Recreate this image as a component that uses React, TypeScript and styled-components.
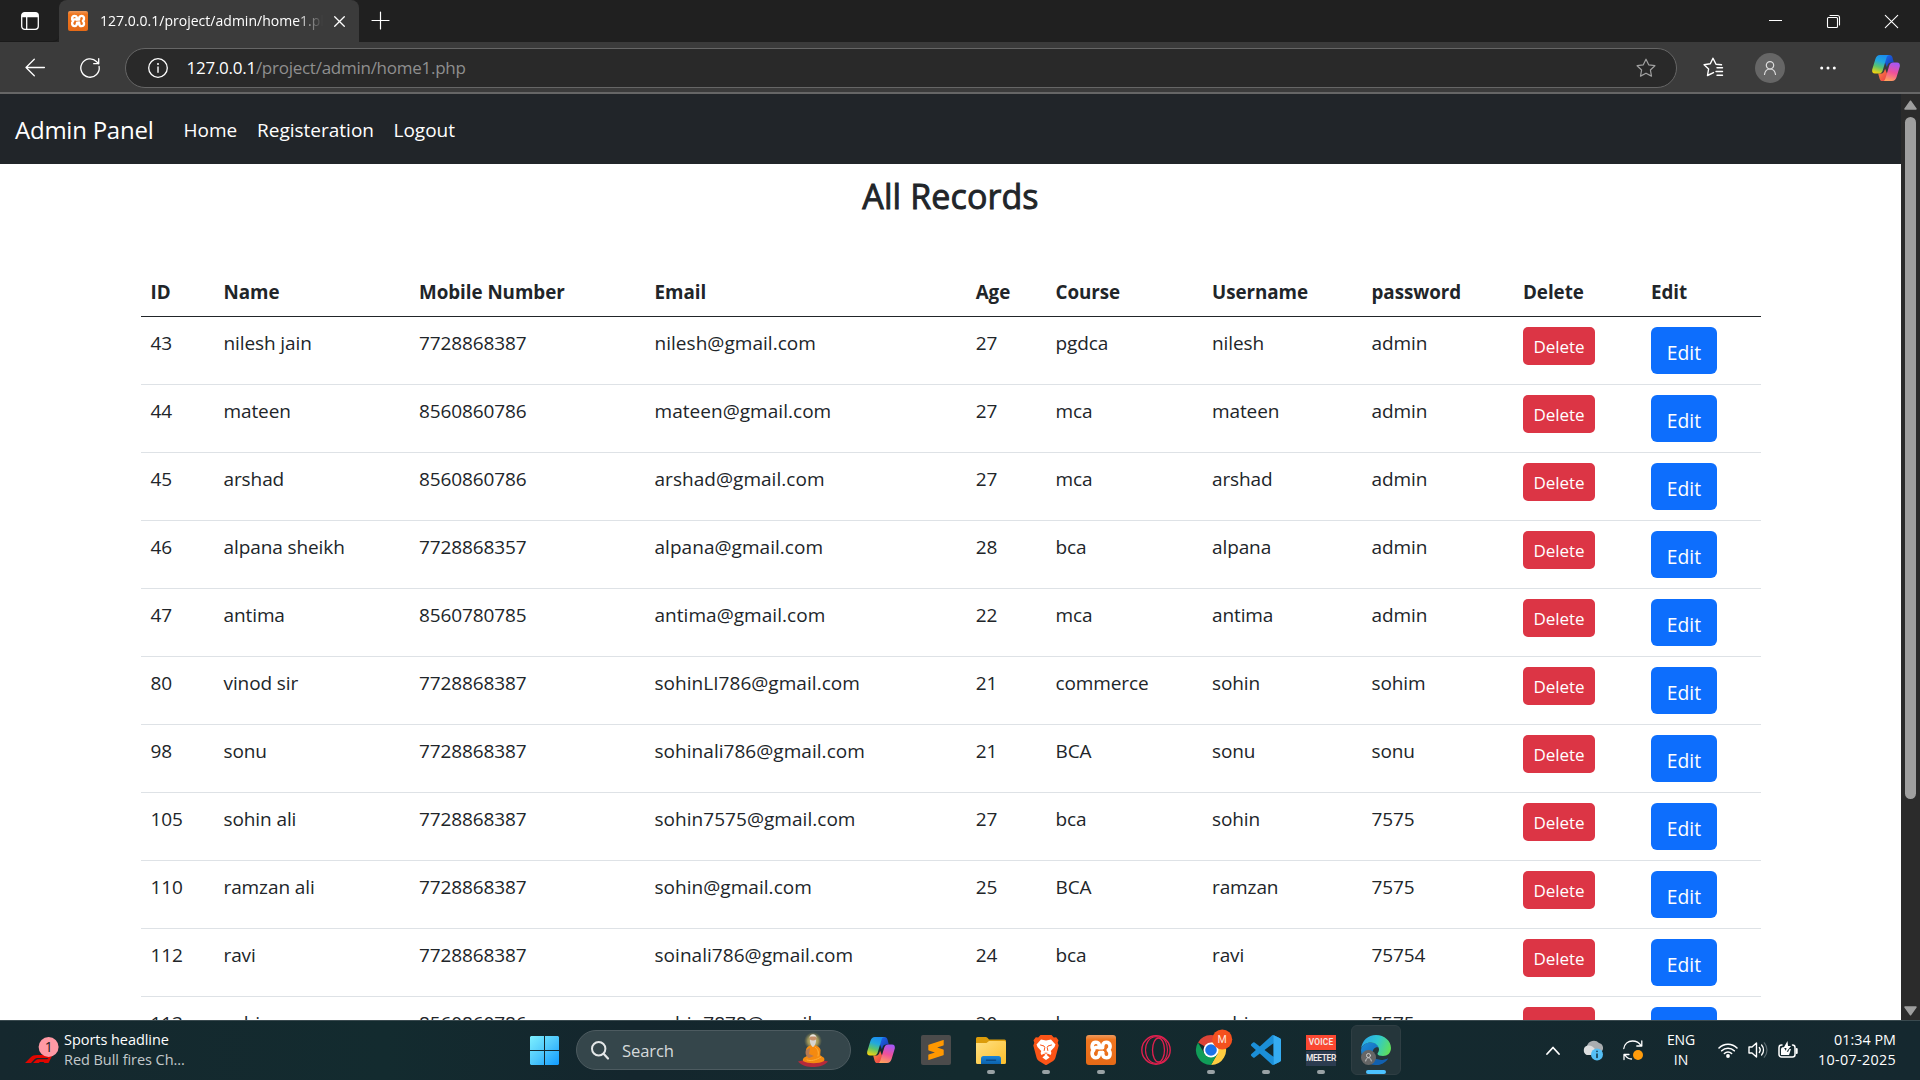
import React from "react";
import styled, { createGlobalStyle, css } from "styled-components";
import { SiSublimetext } from "react-icons/si";

const GlobalStyle = createGlobalStyle`
  * { box-sizing: border-box; }
  html, body { margin: 0; padding: 0; }
  body {
    width: 1920px;
    height: 1080px;
    overflow: hidden;
    background: #fff;
    font-family: "Open Sans", "Noto Sans", sans-serif;
  }
  svg { display: block; flex: none; overflow: visible; }
`;

const Screen = styled.div`
  width: 1920px;
  height: 1080px;
  display: flex;
  flex-direction: column;
  overflow: hidden;
`;

/* ---------- browser chrome ---------- */

const TabStrip = styled.div`
  height: 42px;
  flex: none;
  display: flex;
  align-items: stretch;
  justify-content: space-between;
  background: #202020;
`;

const TabGroup = styled.div`
  display: flex;
  align-items: center;
`;

const WorkspaceButton = styled.div`
  width: 59px;
  height: 42px;
  padding-left: 21px;
  display: flex;
  align-items: center;
  border-bottom: 1px solid #1a1a1a;
  border-radius: 0 0 6px 0;
`;

const Tab = styled.div`
  width: 300px;
  height: 42px;
  padding: 0 14px 0 9px;
  display: flex;
  align-items: center;
  background: #3b3b3b;
  border-radius: 8px 8px 0 0;
`;

const TabTitle = styled.div`
  width: 223px;
  margin: -1px 11px 0 12px;
  overflow: hidden;
  white-space: nowrap;
  color: #fff;
  font-size: 14px;
  letter-spacing: 0.02px;
  line-height: 22px;
  mask-image: linear-gradient(90deg, #000 88%, transparent 100%);
`;

const NewTab = styled.div`
  margin-left: 13px;
  padding-bottom: 1px;
`;

const WindowControls = styled.div`
  display: flex;
  align-items: center;
  gap: 45px;
  padding-right: 22px;
`;

const Toolbar = styled.div`
  height: 52px;
  flex: none;
  display: flex;
  align-items: center;
  padding: 0 20px 0 25px;
  background: #3b3b3b;
  border-bottom: 2px solid #666;
`;

const AddressBar = styled.div`
  width: 1552px;
  height: 40px;
  margin: 2px 26px 0 25px;
  padding: 0 20px 0 22px;
  display: flex;
  align-items: center;
  border: 1px solid #666;
  border-radius: 20px;
  background: #292929;
`;

const Url = styled.div`
  flex: 1;
  margin-left: 18.5px;
  padding-bottom: 1px;
  color: #8f8f8f;
  font-size: 17px;
  letter-spacing: -0.26px;
  white-space: nowrap;
`;

const UrlHost = styled.span`
  color: #fff;
`;

const ReloadSlot = styled.div`
  margin: 1px 0 0 35px;
`;

const ToolbarActions = styled.div`
  display: flex;
  align-items: center;
`;

const Avatar = styled.div`
  width: 30px;
  height: 30px;
  margin: 2px 35px 0 32px;
  border-radius: 50%;
  background: #666;
  display: flex;
  align-items: center;
  justify-content: center;
`;

const CopilotSlot = styled.div`
  margin-left: 36px;
  padding-top: 2px;
`;

/* ---------- page ---------- */

const Viewport = styled.div`
  height: 926px;
  flex: none;
  display: flex;
`;

const Page = styled.main`
  width: 1901px;
  height: 926px;
  overflow: hidden;
  background: #fff;
  color: #212529;
`;

const Navbar = styled.nav`
  height: 70px;
  display: flex;
  align-items: center;
  padding: 2px 0 0 15px;
  background: #212529;
  color: #fff;
  white-space: nowrap;
`;

const Brand = styled.div`
  width: 168.5px;
  font-size: 24px;
  letter-spacing: -0.24px;
  line-height: 38px;
`;

const NavLink = styled.div<{ $w: number }>`
  width: ${(p) => p.$w}px;
  font-size: 19px;
  letter-spacing: 0;
  line-height: 30px;
`;

const Title = styled.h2`
  height: 42px;
  margin: 11px 0 49px;
  text-align: center;
  font-size: 34px;
  font-weight: 400;
  letter-spacing: 0.1px;
  line-height: 42px;
  -webkit-text-stroke: 0.9px #212529;
`;

const Table = styled.table`
  width: 1620px;
  margin: 0 auto;
  table-layout: fixed;
  border-collapse: separate;
  border-spacing: 0;
  font-size: 19px;
  line-height: 30px;
`;

const HeadCell = styled.th<{ $w: number }>`
  width: ${(p) => p.$w}px;
  height: 51px;
  padding: 11px 10px 9px;
  text-align: left;
  font-weight: 700;
  font-size: 18.8px;
  letter-spacing: -0.04px;
  border-bottom: 1px solid #212529;
  white-space: nowrap;
`;

const Cell = styled.td<{ $action?: boolean; $wide?: boolean }>`
  height: 68px;
  padding: ${(p) => (p.$action ? 10 : 11)}px 10px 9px;
  vertical-align: top;
  border-bottom: 1px solid #dee2e6;
  letter-spacing: ${(p) => (p.$wide ? 0.04 : -0.1)}px;
  white-space: nowrap;
`;

const ActionButton = styled.button<{ $kind: "delete" | "edit" }>`
  display: block;
  border: 0;
  padding: 0;
  color: #fff;
  font-family: inherit;
  ${(p) =>
    p.$kind === "delete"
      ? css`
          width: 72px;
          height: 38px;
          border-radius: 5px;
          background: #dc3545;
          font-size: 17px;
          letter-spacing: -0.1px;
        `
      : css`
          width: 66px;
          height: 47px;
          padding-top: 3px;
          border-radius: 6px;
          background: #0d6efd;
          font-size: 19.3px;
        `}
`;

const Scrollbar = styled.div`
  width: 19px;
  height: 926px;
  padding: 6px 3px 4px;
  display: flex;
  flex-direction: column;
  align-items: center;
  background: #2b2b2b;
`;

const ScrollThumb = styled.div`
  width: 11px;
  height: 682px;
  margin: 7px 0 auto;
  border-radius: 6px;
  background: #9f9f9f;
`;

/* ---------- taskbar ---------- */

const Taskbar = styled.footer`
  height: 60px;
  flex: none;
  display: flex;
  align-items: center;
  justify-content: space-between;
  background: linear-gradient(90deg, #15282e 0%, #132b2f 20%, #14262d 33%, #132a2e 50%, #15282f 100%);
  border-top: 1px solid #3a4a4f;
  color: #fff;
  font-size: 14px;
  line-height: 20px;
  white-space: nowrap;
`;

const Widget = styled.div`
  width: 530px;
  display: flex;
  align-items: center;
  padding-left: 25px;
`;

const WidgetLogo = styled.div`
  margin-top: -3px;
`;

const WidgetText = styled.div`
  margin: -2px 0 0 5px;
  font-size: 14.5px;
  letter-spacing: -0.05px;
`;

const Muted = styled.div`
  color: #c3c9cb;
`;

const Apps = styled.div`
  flex: 1;
  height: 59px;
  display: flex;
  align-items: center;
`;

const SearchBox = styled.div`
  width: 275px;
  height: 40px;
  margin: -1px 5px 0 17px;
  padding: 0 22px 0 14px;
  display: flex;
  align-items: center;
  border: 1px solid #4d5b60;
  border-radius: 20px;
  background: #35464b;
`;

const SearchLabel = styled.div`
  flex: 1;
  margin-left: 13px;
  padding-top: 1px;
  color: #d5dadb;
  font-size: 16.6px;
  letter-spacing: -0.1px;
`;

const AppSlot = styled.div<{ $active?: boolean }>`
  position: relative;
  width: 50px;
  height: 50px;
  margin: -1px ${(p) => (p.$active ? 0 : 5)}px 0 0;
  display: flex;
  align-items: center;
  justify-content: center;
  border: 1px solid ${(p) => (p.$active ? "#2f3e43" : "transparent")};
  border-radius: 6px;
  background: ${(p) => (p.$active ? "#25363b" : "transparent")};
`;

const Indicator = styled.div<{ $active?: boolean }>`
  position: absolute;
  bottom: 0;
  left: 50%;
  width: ${(p) => (p.$active ? 20 : 8)}px;
  height: 4px;
  transform: translateX(-50%);
  border-radius: 2px;
  background: ${(p) => (p.$active ? "#4cc2ff" : "#99a2a5")};
`;

const XamppTile = styled.div<{ $s: number }>`
  width: ${(p) => p.$s}px;
  height: ${(p) => p.$s}px;
  flex: none;
  display: flex;
  align-items: center;
  justify-content: center;
  border-radius: ${(p) => p.$s / 10}px;
  background: linear-gradient(#ec9a5e, #f0761f 16%, #e56a17);
`;

const SublimeTile = styled.div`
  width: 30px;
  height: 30px;
  display: flex;
  align-items: center;
  justify-content: center;
  border-radius: 2px;
  background: #4b4b4b;
  color: #ff9800;
`;

const VoiceTile = styled.div`
  width: 30px;
  height: 30px;
  display: flex;
  flex-direction: column;
  gap: 1px;
  font-family: Roboto, "Liberation Sans", sans-serif;
  font-size: 8.4px;
  font-weight: 600;
  text-align: center;
  color: #f2e9e6;
`;

const VoiceRow = styled.div<{ $bg: string; $spacing: number }>`
  flex: 1;
  line-height: 15px;
  background: ${(p) => p.$bg};
  letter-spacing: ${(p) => p.$spacing}px;
`;

const Tray = styled.div`
  display: flex;
  align-items: center;
  padding: 0 24px 1px 0;
`;

const Language = styled.div`
  width: 30px;
  margin: 0 22px 0 23px;
  text-align: center;
  letter-spacing: -0.1px;
`;

const Clock = styled.div`
  width: 80px;
  margin: -1px 0 0 18px;
  text-align: right;
`;

const ClockLine = styled.div<{ $spacing: number }>`
  font-size: 14.3px;
  letter-spacing: ${(p) => p.$spacing}px;
`;

/* ---------- drawings ---------- */

const stroke = (w = 1.3, c = "#fff") => ({ fill: "none", stroke: c, strokeWidth: w, strokeLinecap: "round" as const, strokeLinejoin: "round" as const });

const XamppMark = ({ size }: { size: number }) => (
  <XamppTile $s={size}>
    <svg width={size} height={size} viewBox="0 0 30 30">
      <g fill="none" stroke="#fff" strokeWidth="3.600" strokeLinejoin="round" strokeLinecap="round">
        <path d="M9.500 12.500H13.200V9.500C12.800 8 11.500 7.300 9.800 7.300C5.800 7.300 5 12.800 7.800 15C5 17.200 5.800 22.700 9.800 22.700C12.500 22.700 13.600 20.500 13.600 17.500H16.600" />
        <path d="M13.200 12.700H16.600C16.400 9.500 17.500 7.300 20.200 7.300C24.800 7.300 25 12.800 22.300 15C25 17.200 24.800 22.700 20.300 22.700C17.600 22.700 16.600 20.500 16.600 17.500" />
      </g>
    </svg>
  </XamppTile>
);

const Copilot = ({ id }: { id: string }) => (
  <svg width="28" height="26" viewBox="0 0 28 26">
    <defs>
      <linearGradient id={id + "a"} x1=".6" y1="0" x2=".3" y2="1">
        <stop offset="0" stopColor="#1b8df0" />
        <stop offset=".35" stopColor="#22a9dc" />
        <stop offset=".65" stopColor="#5cc46b" />
        <stop offset="1" stopColor="#f3d410" />
      </linearGradient>
      <linearGradient id={id + "b"} x1=".6" y1="0" x2=".3" y2="1">
        <stop offset="0" stopColor="#a557f5" />
        <stop offset=".5" stopColor="#f0509a" />
        <stop offset="1" stopColor="#ffa35c" />
      </linearGradient>
      <linearGradient id={id + "c"} x1="0" y1="0" x2="1" y2="1">
        <stop offset="0" stopColor="#1d6ff0" />
        <stop offset="1" stopColor="#1836ae" />
      </linearGradient>
      <linearGradient id={id + "d"} x1="0" y1="0" x2="1" y2="1">
        <stop offset="0" stopColor="#ff8f3c" />
        <stop offset="1" stopColor="#e8344c" />
      </linearGradient>
    </defs>
    <path fill={`url(#${id}c)`} d="M12 0h5.600c1.600 0 2.400.9 2.900 2.600l1.300 4.800h-2.600c-2 0-3 .9-3.600 2.800l-.7 2L11.600 4z" />
    <path fill={`url(#${id}d)`} d="M16 26h-5.600c-1.600 0-2.400-.9-2.900-2.600l-1.300-4.800h2.600c2 0 3-.9 3.600-2.800l.7-2L16.400 22z" />
    <path fill={`url(#${id}a)`} d="M8 0h9.500c-1.500 0-2.400 1-2.900 2.600L10.700 15.500C10 17.700 8.800 18.600 6.500 18.600H3C.8 18.600-.3 17 .2 14.500L3.400 4C4.300 1.300 5.600 0 8 0z" />
    <path fill={`url(#${id}b)`} d="M20 26h-9.500c1.500 0 2.400-1 2.900-2.600L17.300 10.500C18 8.300 19.200 7.400 21.500 7.400h3.500c2.200 0 3.300 1.600 2.800 4.100L24.600 22C23.700 24.700 22.400 26 20 26z" />
  </svg>
);

const Person = ({ size }: { size: number }) => (
  <svg width={size} height={size} viewBox="0 0 14 14">
    <circle cx="7" cy="4.300" r="3.700" {...stroke(1.2, "#ddd")} />
    <path d="M1.500 13.500C2 10 4 8 7 8s5 2 5.500 5.500" {...stroke(1.2, "#ddd")} />
  </svg>
);

const starPath = "M10 1.200l2.700 5.600 6.200.9-4.500 4.300 1.100 6.100L10 15.200l-5.500 2.900 1.100-6.100L1.100 7.700l6.200-.9z";

const Guru = () => (
  <svg width="30" height="34" viewBox="0 0 30 34">
    <defs>
      <radialGradient id="halo">
        <stop offset="0" stopColor="#e8d98a" />
        <stop offset=".6" stopColor="#b9a85c" stopOpacity=".75" />
        <stop offset="1" stopColor="#8a8550" stopOpacity="0" />
      </radialGradient>
    </defs>
    <circle cx="15" cy="8" r="9" fill="url(#halo)" />
    <path d="M0 28.500C8 26 22 26 30 28.500C26 33 20 34 15 34S4 33 0 28.500z" fill="#b62a3a" />
    <path d="M5 28C4 24 9 24 9.500 22L8 17C8.500 13.500 12 12 15 12s6.800 1.500 7.600 5l-.4 5c1 2 5.800 2 3.800 6-5 3-16 3-21 0z" fill="#f58a10" />
    <path d="M8 17c-1 3-.4 6 3 8l5-2-5-2 1-6z" fill="#b87952" />
    <path d="M9 27c4 1.500 9 0 14-3M17 14c3 2 4 5 3 9" {...stroke(1, "#ffb13a")} />
    <circle cx="15" cy="5.500" r="3.400" fill="#c7906a" />
    <path d="M11.500 5C11.500 0 18.500 0 18.500 5L17.500 3.500h-5z" fill="#e9e6e0" />
    <path d="M12 6.500c1.500 1.300 4.500 1.300 6 0 .4 3-1.300 7-3 7.500-1.700-.5-3.400-4.500-3-7.500z" fill="#d8d5d0" />
  </svg>
);

const Chrome = () => (
  <svg width="30" height="30" viewBox="0 0 48 48">
    <path d="M24 24L3.200 12A24 24 0 0 1 44.800 12z" fill="#dc4437" />
    <path d="M44.800 12A24 24 0 0 1 24 48L34.400 30 24 12z" fill="#ffcd40" />
    <path d="M3.200 12A24 24 0 0 0 24 48L34.400 30 24 34 13.600 30z" fill="#109d58" />
    <circle cx="24" cy="24" r="12" fill="#fff" />
    <circle cx="24" cy="24" r="9.300" fill="#1a73e8" />
    <circle cx="42" cy="7" r="16" fill="#f4511e" />
    <text x="42" y="13" fill="#ffe6dc" fontSize="17" fontFamily="Roboto, sans-serif" textAnchor="middle">M</text>
  </svg>
);

const Edge = () => (
  <svg width="30" height="30" viewBox="0 0 30 30">
    <defs>
      <linearGradient id="edgeTop" x1="0" y1=".3" x2="1" y2=".6">
        <stop offset="0" stopColor="#2aa5e8" />
        <stop offset=".5" stopColor="#2fc8d0" />
        <stop offset="1" stopColor="#5fe05a" />
      </linearGradient>
      <linearGradient id="edgeLow" x1="0" y1="0" x2="1" y2="1">
        <stop offset="0" stopColor="#1d8ddb" />
        <stop offset="1" stopColor="#0d4f9e" />
      </linearGradient>
    </defs>
    <path d="M0 15C1 10 5 7.500 10 7.500c4 0 7 2 7.500 5-3-1-6 1.500-6 5.500 0 6 7 9 15.500 5.500C24 27.500 20 30 15 30 6 30 0 23 0 15z" fill="url(#edgeLow)" />
    <path d="M11.500 18c0 6 7 9 15.500 5.500-2.500 4-6.500 6.500-12 6.500C9 28 7 21 10 16z" fill="#1260ae" />
    <path d="M0 14C1 5.500 7 0 15 0c8.500 0 15 6 15 13 0 5-3.500 8-8 8-3 0-5.500-1-5.500-2.300 0-1 1.500-1.700 1.500-4.200C18 11 14.500 7.500 10 7.500 5 7.500 1.500 10 0 14z" fill="url(#edgeTop)" />
    <circle cx="7.500" cy="22.500" r="7.500" fill="#666" />
    <circle cx="7.500" cy="20.500" r="2" {...stroke(1, "#ccc")} />
    <path d="M4.700 26c.4-2.200 1.200-3.200 2.800-3.200s2.400 1 2.800 3.200" {...stroke(1, "#ccc")} />
  </svg>
);

/* ---------- data ---------- */

const columns: [string, number][] = [
  ["ID", 73], ["Name", 195.5], ["Mobile Number", 235.5], ["Email", 321.2], ["Age", 79.8],
  ["Course", 156.5], ["Username", 159.5], ["password", 151.5], ["Delete", 128], ["Edit", 119.5],
];

const records = [
  ["43", "nilesh jain", "7728868387", "nilesh@gmail.com", "27", "pgdca", "nilesh", "admin"],
  ["44", "mateen", "8560860786", "mateen@gmail.com", "27", "mca", "mateen", "admin"],
  ["45", "arshad", "8560860786", "arshad@gmail.com", "27", "mca", "arshad", "admin"],
  ["46", "alpana sheikh", "7728868357", "alpana@gmail.com", "28", "bca", "alpana", "admin"],
  ["47", "antima", "8560780785", "antima@gmail.com", "22", "mca", "antima", "admin"],
  ["80", "vinod sir", "7728868387", "sohinLI786@gmail.com", "21", "commerce", "sohin", "sohim"],
  ["98", "sonu", "7728868387", "sohinali786@gmail.com", "21", "BCA", "sonu", "sonu"],
  ["105", "sohin ali", "7728868387", "sohin7575@gmail.com", "27", "bca", "sohin", "7575"],
  ["110", "ramzan ali", "7728868387", "sohin@gmail.com", "25", "BCA", "ramzan", "7575"],
  ["112", "ravi", "7728868387", "soinali786@gmail.com", "24", "bca", "ravi", "75754"],
  ["113", "sohin", "8560860786", "sohin7878@gmail.com", "20", "bca", "sohin", "7575"],
];

export default function App() {
  return (
    <Screen>
      <GlobalStyle />
      <TabStrip>
        <TabGroup>
          <WorkspaceButton>
            <svg width="18" height="18" viewBox="0 0 18 18">
              <rect x=".7" y=".7" width="16.600" height="16.600" rx="3" {...stroke(1.3)} />
              <path d="M.7 5.300V3.500A2.800 2.800 0 0 1 3.500.7h11a2.800 2.800 0 0 1 2.800 2.800v1.800z" fill="#fff" />
              <path d="M5.700 5v12" {...stroke(1.3)} />
            </svg>
          </WorkspaceButton>
          <Tab>
            <XamppMark size={20} />
            <TabTitle>127.0.0.1/project/admin/home1.php</TabTitle>
            <svg width="11" height="11" viewBox="0 0 11 11"><path d="M.7.7l9.600 9.600M10.300.7L.7 10.300" {...stroke(1.3)} /></svg>
          </Tab>
          <NewTab>
            <svg width="17" height="17" viewBox="0 0 17 17"><path d="M8.500 0v17M0 8.500h17" {...stroke(1.2)} /></svg>
          </NewTab>
        </TabGroup>
        <WindowControls>
          <svg width="13" height="13" viewBox="0 0 13 13"><path d="M0 5.500h13" stroke="#fff" /></svg>
          <svg width="13" height="13" viewBox="0 0 13 13">
            <rect x=".5" y="2.500" width="10" height="10" rx="1" {...stroke(1.1)} />
            <path d="M3 .5h7.500a2 2 0 0 1 2 2V10" {...stroke(1.1)} />
          </svg>
          <svg width="13" height="13" viewBox="0 0 13 13"><path d="M.3.3l12.400 12.400M12.700.3L.3 12.700" {...stroke(1.1)} /></svg>
        </WindowControls>
      </TabStrip>

      <Toolbar>
        <svg width="20" height="18" viewBox="0 0 20 18"><path d="M19.400 9.500H1M9.300 1.200L1 9.500l8.300 8.300" {...stroke(1.3)} /></svg>
        <ReloadSlot>
          <svg width="20" height="20" viewBox="0 0 20 20">
            <path d="M19.100 8.500A9.200 9.200 0 1 1 16.700 3.700L18.700 5.700M18.700.7v5h-5" {...stroke(1.3)} />
          </svg>
        </ReloadSlot>
        <AddressBar>
          <svg width="20" height="20" viewBox="0 0 20 20">
            <circle cx="10" cy="10" r="9.300" {...stroke(1.3)} />
            <path d="M10 9v5.200" {...stroke(1.4)} />
            <circle cx="10" cy="6" r="1" fill="#fff" />
          </svg>
          <Url><UrlHost>127.0.0.1</UrlHost>/project/admin/home1.php</Url>
          <svg width="20" height="20" viewBox="0 0 20 20"><path d={starPath} {...stroke(1.2, "#a0a0a0")} /></svg>
        </AddressBar>
        <ToolbarActions>
          <svg width="20" height="20" viewBox="0 0 20 20">
            <path d="M13 7.200L10 1.200 7.300 6.800l-6.200.9L5.600 12l-1.100 6.500L10.500 15.600M13 7.200l5.500.6M14 10.700h5.500M13 14.500h6.500M14 18.200h5.500" {...stroke(1.4)} />
          </svg>
          <Avatar><Person size={14} /></Avatar>
          <svg width="16" height="6" viewBox="0 0 16 6">
            <circle cx="1.700" cy="4" r="1.500" fill="#fff" /><circle cx="8" cy="4" r="1.500" fill="#fff" /><circle cx="14.300" cy="4" r="1.500" fill="#fff" />
          </svg>
          <CopilotSlot><Copilot id="cpTop" /></CopilotSlot>
        </ToolbarActions>
      </Toolbar>

      <Viewport>
        <Page>
          <Navbar>
            <Brand>Admin Panel</Brand>
            <NavLink $w={73.5}>Home</NavLink>
            <NavLink $w={136.5}>Registeration</NavLink>
            <NavLink $w={70}>Logout</NavLink>
          </Navbar>
          <Title>All Records</Title>
          <Table>
            <thead>
              <tr>{columns.map(([name, w]) => <HeadCell key={name} $w={w}>{name}</HeadCell>)}</tr>
            </thead>
            <tbody>
              {records.map((record) => (
                <tr key={record[0]}>
                  {record.map((value, i) => <Cell key={i} $wide={i === 3}>{value}</Cell>)}
                  <Cell $action><ActionButton $kind="delete">Delete</ActionButton></Cell>
                  <Cell $action><ActionButton $kind="edit">Edit</ActionButton></Cell>
                </tr>
              ))}
            </tbody>
          </Table>
        </Page>
        <Scrollbar>
          <svg width="13" height="10" viewBox="0 0 13 10"><path d="M6.500 1.200L12 9H1z" fill="#9f9f9f" stroke="#9f9f9f" strokeWidth="1.500" strokeLinejoin="round" /></svg>
          <ScrollThumb />
          <svg width="13" height="10" viewBox="0 0 13 10"><path d="M6.500 8.800L12 1H1z" fill="#9f9f9f" stroke="#9f9f9f" strokeWidth="1.500" strokeLinejoin="round" /></svg>
        </Scrollbar>
      </Viewport>

      <Taskbar>
        <Widget>
          <WidgetLogo>
            <svg width="34" height="42" viewBox="0 0 34 42">
              <path d="M0 35l5.500-5.500C7.500 27.700 9 27 12 27h15l-2.800 3H13.500c-2 0-3 .3-4.200 1.500L6 35z" fill="#e10600" />
              <path d="M8 35l2.500-2.500c1-.9 1.700-1.200 3.300-1.200h9.500L20.800 34h-6l-1 1z" fill="#e10600" />
              <path d="M18.500 35L25.500 28H27l-3.500 7z" fill="#e10600" />
              <circle cx="23.600" cy="19" r="10" fill="#ff99a4" />
              <text x="23.800" y="24" fontSize="14" fill="#1b1b1b" textAnchor="middle" fontFamily="Open Sans, sans-serif">1</text>
            </svg>
          </WidgetLogo>
          <WidgetText>
            <div>Sports headline</div>
            <Muted>Red Bull fires Ch...</Muted>
          </WidgetText>
        </Widget>
        <Apps>
          <svg width="29" height="29" viewBox="0 0 29 29">
            <defs>
              <linearGradient id="win" gradientUnits="userSpaceOnUse" x1="0" y1="0" x2="29" y2="29">
                <stop offset="0" stopColor="#7df0ff" /><stop offset=".5" stopColor="#4fc8fb" /><stop offset="1" stopColor="#109bff" />
              </linearGradient>
            </defs>
            <path d="M1 0h13v14H0V1zM15 0h13l1 1v13H15zM0 15h14v14H1l-1-1zM15 15h14v13l-1 1H15z" fill="url(#win)" />
          </svg>
          <SearchBox>
            <svg width="18" height="19" viewBox="0 0 18 19">
              <circle cx="7.700" cy="7.700" r="6.700" {...stroke(2, "#e4e7e8")} /><path d="M12.600 12.800l4.400 4.700" {...stroke(2.2, "#e4e7e8")} />
            </svg>
            <SearchLabel>Search</SearchLabel>
            <Guru />
          </SearchBox>
          <AppSlot><Copilot id="cpBar" /></AppSlot>
          <AppSlot><SublimeTile><SiSublimetext size={20} /></SublimeTile></AppSlot>
          <AppSlot>
            <svg width="30" height="30" viewBox="0 0 30 30">
              <defs>
                <linearGradient id="fold" x1="0" y1="0" x2="1" y2="1"><stop offset="0" stopColor="#ffe083" /><stop offset="1" stopColor="#fcbf2b" /></linearGradient>
                <linearGradient id="foldBlue" x1="0" y1="0" x2="0" y2="1"><stop offset="0" stopColor="#1a86d9" /><stop offset="1" stopColor="#0c62ab" /></linearGradient>
              </defs>
              <path d="M0 3.500Q0 2 1.500 2h8.200q1 0 1.700.7L13 4.500h15.500q1.500 0 1.500 1.500v5H0z" fill="#dc9c0a" />
              <path d="M0 8h10.500l2.500-2h15.500Q30 6 30 7.500v20q0 1.500-1.500 1.500h-27Q0 29 0 27.500z" fill="url(#fold)" />
              <path d="M5 29v-5.500Q5 21 7.500 21h15Q25 21 25 23.500V29z" fill="url(#foldBlue)" />
              <path d="M10.500 25.200h9" {...stroke(1.4, "#0a4a87")} />
            </svg>
            <Indicator />
          </AppSlot>
          <AppSlot>
            <svg width="26" height="30" viewBox="0 0 26 30">
              <path d="M7.500 0h11l2.300 2.600 2.400-.3 2.300 3-.8 2.500 1 2.700-3.200 12c-.4 1.500-1.200 2.500-2.400 3.400L13.500 30h-1l-6.600-4.100c-1.200-.9-2-1.900-2.400-3.400L.3 10.500l1-2.700L.5 5.300l2.300-3 2.400.3z" fill="#fb5417" />
              <path d="M8 4.500l5 .9 5-.9 4.500 5-1 2.600-3.700 4 .6 2-.8 2-2.600-1.300-1.400 1 3 2.600L13 25l-3.600-2.600 3-2.600-1.400-1-2.600 1.300-.8-2 .6-2-3.700-4-1-2.600z" fill="#fff" />
              <path d="M7.500 10l3.500 1 .8 1.500-.6 3M18.500 10l-3.500 1-.8 1.500.6 3" {...stroke(1, "#fb5417")} />
              <path d="M12 18.200h2" {...stroke(0.9, "#fb5417")} />
            </svg>
            <Indicator />
          </AppSlot>
          <AppSlot><XamppMark size={30} /><Indicator /></AppSlot>
          <AppSlot>
            <svg width="30" height="30" viewBox="0 0 30 30">
              <circle cx="15" cy="15" r="14.200" {...stroke(1.4, "#e3204f")} />
              <ellipse cx="17.500" cy="15" rx="6" ry="12" {...stroke(1.3, "#e3204f")} />
              <path d="M17 2C8 .5 4.500 9 4.500 15S8 29.500 17 28M17 2c7 0 9.500 7 9.500 13s-2.500 13-9.500 13" {...stroke(1.1, "#e3204f")} />
            </svg>
          </AppSlot>
          <AppSlot><Chrome /><Indicator /></AppSlot>
          <AppSlot>
            <svg width="30" height="30" viewBox="0 0 24 24">
              <path fill="#1b8fd8" d="M23.150 2.587L18.210.210a1.494 1.494 0 0 0-1.705.290l-9.460 8.630-4.120-3.128a.999.999 0 0 0-1.276.057L.327 7.261A1 1 0 0 0 .326 8.740L3.899 12 .326 15.260a1 1 0 0 0 .001 1.479L1.650 17.940a.999.999 0 0 0 1.276.057l4.120-3.128 9.460 8.630a1.492 1.492 0 0 0 1.704.290l4.942-2.377A1.500 1.500 0 0 0 24 20.060V3.939a1.500 1.500 0 0 0-.850-1.352zm-5.146 14.861L10.826 12l7.178-5.448v10.896z" />
              <path fill="#35acf2" d="M18.004 0.300L18.210.210 23.150 2.587A1.500 1.500 0 0 1 24 3.939V20.060A1.500 1.500 0 0 1 23.150 21.410L18.210 23.790z" />
            </svg>
            <Indicator />
          </AppSlot>
          <AppSlot>
            <VoiceTile>
              <VoiceRow $bg="#fb4832" $spacing={0.15}>VOICE</VoiceRow>
              <VoiceRow $bg="#2c3c50" $spacing={-0.35}>MEETER</VoiceRow>
            </VoiceTile>
            <Indicator />
          </AppSlot>
          <AppSlot $active><Edge /><Indicator $active /></AppSlot>
        </Apps>
        <Tray>
          <svg width="14" height="9" viewBox="0 0 14 9"><path d="M1 8l6-6.500L13 8" {...stroke(1.8)} /></svg>
          <svg width="63" height="22" viewBox="0 0 63 22">
            <path d="M27 16a5 5 0 0 1 0-9 7 7 0 0 1 12-3 5 5 0 0 1 3 8l-3 4z" fill="#a9adb0" />
            <path d="M27 16a5 5 0 0 1 .5-9.500c3-.5 5 .5 7 3l4 6.500z" fill="#dcdedf" />
            <circle cx="37" cy="15.500" r="6" fill="#55bff5" />
            <path d="M37 15v3.500M37 12.300v.2" {...stroke(1.5, "#10303d")} />
          </svg>
          <svg width="20" height="22" viewBox="0 0 20 22">
            <path d="M.8 9.500C1.500 5 5 2 9.500 2c4 0 7 2 8.700 4.800M18.800 2v5h-5M8.500 20C6 20 3.500 18.500 2 16M1 20.500V15.500h5" {...stroke(1.3)} />
            <circle cx="15" cy="16" r="5" fill="#ff9c0c" />
          </svg>
          <Language><div>ENG</div><div>IN</div></Language>
          <svg width="20" height="16" viewBox="0 0 20 16">
            <path d="M1 6a12.700 12.700 0 0 1 18 0M3.700 8.800a8.900 8.900 0 0 1 12.600 0M6.400 11.500a5.100 5.100 0 0 1 7.200 0" {...stroke(1.6)} />
            <circle cx="10" cy="14" r="1.900" fill="#fff" />
          </svg>
          <svg width="40" height="18" viewBox="0 0 40 18">
            <path d="M11 6h3l4.500-4v14L14 12h-3z" {...stroke(1.4)} />
            <path d="M21.300 6.500a4 4 0 0 1 0 5M23.600 4a7.500 7.500 0 0 1 0 10" {...stroke(1.3)} />
            <path d="M26.300 1.800a11 11 0 0 1 0 14.400" {...stroke(1.2, "#5b6a6f")} />
          </svg>
          <svg width="20" height="18" viewBox="0 0 20 18">
            <path d="M4 4H3.500A2.500 2.500 0 0 0 1 6.500v7A2.500 2.500 0 0 0 3.500 16h11a2.500 2.500 0 0 0 2.500-2.500v-7A2.500 2.500 0 0 0 14.500 4" {...stroke(1.5)} />
            <path d="M18.700 8v4" {...stroke(2)} />
            <path d="M3 8.500c0-1.500 1-2.500 2.500-2.500L8 10l2 1 1.500-3H13l-2 6H3z" fill="#fff" />
            <path d="M9.500 0L5.500 7h3l-1 5 5.500-7H10z" fill="#fff" />
          </svg>
          <Clock>
            <ClockLine $spacing={0.05}>01:34 PM</ClockLine>
            <ClockLine $spacing={0.35}>10-07-2025</ClockLine>
          </Clock>
        </Tray>
      </Taskbar>
    </Screen>
  );
}
